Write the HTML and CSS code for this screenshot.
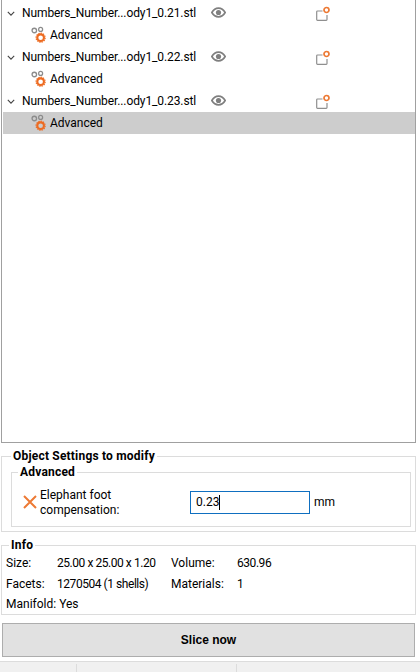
FILE: index.html
```html
<!DOCTYPE html>
<html lang="en">
<head>
<meta charset="utf-8">
<title>Object settings</title>
<link rel="stylesheet" href="styles.css">
</head>
<body>
<svg class="defs" width="0" height="0" aria-hidden="true">
  <defs>
    <symbol id="chev" viewBox="0 0 10 6"><path d="M1 1l4 4 4-4" fill="none" stroke="#444" stroke-width="1.400"/></symbol>
    <symbol id="gear" viewBox="0 0 20 20">
      <circle cx="4.800" cy="5" r="2.500" fill="none" stroke="#8c8c8c" stroke-width="1.500"/>
      <circle cx="11.800" cy="3.800" r="2.200" fill="none" stroke="#8c8c8c" stroke-width="1.400"/>
      <circle cx="11.800" cy="13" r="3.700" fill="none" stroke="#ed6b21" stroke-width="2.300"/>
      <circle cx="11.800" cy="13" r="5.100" fill="none" stroke="#ed6b21" stroke-width="1.200" stroke-dasharray="1.600 1.000"/>
    </symbol>
    <symbol id="eye" viewBox="0 0 14 10">
      <path d="M.8 5C2.400 2.200 4.500 1 7 1s4.600 1.200 6.200 4C11.600 7.800 9.500 9 7 9S2.400 7.800.8 5z" fill="none" stroke="#7f7f7f" stroke-width="1.600"/>
      <circle cx="7" cy="5" r="2.400" fill="#7f7f7f"/>
    </symbol>
    <symbol id="obj" viewBox="0 0 15 15">
      <path d="M6.500 5H1.500a.8.800 0 0 0-.8.800v7.700a.8.800 0 0 0 .8.800h8.700a.8.800 0 0 0 .8-.8V9" fill="none" stroke="#8f8f8f" stroke-width="1.200"/>
      <circle cx="10.500" cy="4" r="2.500" fill="none" stroke="#ed7a35" stroke-width="1.700"/>
    </symbol>
  </defs>
</svg>

<div class="tree">
  <div class="row">
    <svg class="chev"><use href="#chev"/></svg>
    <span class="name">Numbers_Number...ody1_0.21.stl</span>
    <svg class="eye"><use href="#eye"/></svg>
    <svg class="obj"><use href="#obj"/></svg>
  </div>
  <div class="row child">
    <svg class="gear"><use href="#gear"/></svg>
    <span>Advanced</span>
  </div>
  <div class="row">
    <svg class="chev"><use href="#chev"/></svg>
    <span class="name">Numbers_Number...ody1_0.22.stl</span>
    <svg class="eye"><use href="#eye"/></svg>
    <svg class="obj"><use href="#obj"/></svg>
  </div>
  <div class="row child">
    <svg class="gear"><use href="#gear"/></svg>
    <span>Advanced</span>
  </div>
  <div class="row">
    <svg class="chev"><use href="#chev"/></svg>
    <span class="name">Numbers_Number...ody1_0.23.stl</span>
    <svg class="eye"><use href="#eye"/></svg>
    <svg class="obj"><use href="#obj"/></svg>
  </div>
  <div class="row child selected">
    <svg class="gear"><use href="#gear"/></svg>
    <span>Advanced</span>
  </div>
</div>

<fieldset class="group settings">
  <legend class="legend">Object Settings to modify</legend>
  <fieldset class="group inner">
    <legend class="legend">Advanced</legend>
    <div class="option">
      <svg class="cross" viewBox="0 0 16 16"><path d="M2 2l12 12M14 2L2 14" fill="none" stroke="#ed7a35" stroke-width="2"/></svg>
      <label class="opt-label">Elephant foot compensation:</label>
      <div class="field">0.23<span class="caret"></span></div>
      <span class="unit">mm</span>
    </div>
  </fieldset>
</fieldset>

<fieldset class="group info">
  <legend class="legend">Info</legend>
  <div class="info-grid">
    <span>Size:</span><span class="num">25.00 x 25.00 x 1.20</span><span>Volume:</span><span class="num">630.96</span>
    <span>Facets:</span><span class="num">1270504 (1 shells)</span><span>Materials:</span><span class="num">1</span>
    <span class="manifold">Manifold: Yes</span>
  </div>
</fieldset>

<button class="slice">Slice now</button>

<div class="status">
  <div class="cell first"></div>
  <div class="cell second"></div>
  <div class="cell"></div>
</div>
</body>
</html>
```
FILE: styles.css
```css
html, body { margin: 0; height: 672px; overflow: hidden; }
body {
  width: 420px;
  background: #fff;
  color: #000;
  font: 12px/16px Roboto, "Noto Sans", sans-serif;
  display: flex;
  flex-direction: column;
  padding-left: 1px;
  box-sizing: border-box;
}
.defs { position: absolute; }

.tree {
  width: 415px;
  height: 443px;
  box-sizing: border-box;
  border: 1px solid #a0a0a0;
  border-top: 0;
  padding: 2px 0 0 1px;
  flex: none;
}
.row { height: 22px; display: flex; align-items: center; }
.chev { width: 8px; height: 5px; margin-left: 4px; flex: none; }
.name { margin-left: 7px; width: 189px; flex: none; letter-spacing: -.1px; }
.eye { width: 15px; height: 11px; flex: none; margin-top: -1px; }
.obj { width: 15px; height: 15px; flex: none; margin-left: 90px; }
.child { padding-left: 27px; }
.gear { width: 18px; height: 18px; flex: none; margin-right: 2px; }
.selected { background: #cdcdcd; }

.group { border: 1px solid #dcdcdc; margin: 0; padding: 0; min-width: 0; }
.legend { font-weight: 700; padding: 0 2px; margin-left: 0; line-height: 16px; letter-spacing: .2px; }
.settings { margin-top: 5px; width: 415px; height: 84px; box-sizing: border-box; padding: 0 4px 0 9px; flex: none; }
.inner { height: 63px; box-sizing: border-box; margin-top: 0; }
.inner .legend { margin-left: 6px; }
.option { display: flex; align-items: center; height: 44px; padding-left: 10px; }
.cross { width: 16px; height: 16px; flex: none; }
.opt-label { width: 130px; margin: 2px 0 0 2px; line-height: 15px; flex: none; }
.field {
  width: 120px;
  height: 23px;
  box-sizing: border-box;
  border: 1px solid #0f6fc0;
  margin-left: 20px;
  padding-left: 5px;
  flex: none;
  display: flex;
  align-items: center;
}
.caret { width: 1px; height: 15px; background: #000; }
.unit { margin-left: 4px; }

.info { margin-top: 5px; width: 415px; height: 78px; box-sizing: border-box; flex: none; }
.info .legend { margin-left: 7px; }
.info-grid {
  display: grid;
  grid-template-columns: 51px 114px 66px 1fr;
  grid-auto-rows: 20.500px;
  padding-left: 4px;
  align-items: center;
}
.num { letter-spacing: -.45px; }
.manifold { grid-column: 1 / 3; }

.slice {
  margin: 8px 0 0 1px;
  width: 413px;
  height: 34px;
  flex: none;
  background: #e1e1e1;
  border: 1px solid #adadad;
  font: 700 12px "Liberation Sans", sans-serif;
  color: #000;
  padding: 0;
}

.status {
  margin: 4px 0 0 -1px;
  flex: 1;
  display: flex;
  background: #f0f0f0;
  border-top: 1px solid #dcdcdc;
}
.first { width: 76px; border-right: 1px solid #dcdcdc; margin-top: 2px; }
.second { width: 159px; border-right: 1px solid #dcdcdc; margin-top: 2px; }
```
